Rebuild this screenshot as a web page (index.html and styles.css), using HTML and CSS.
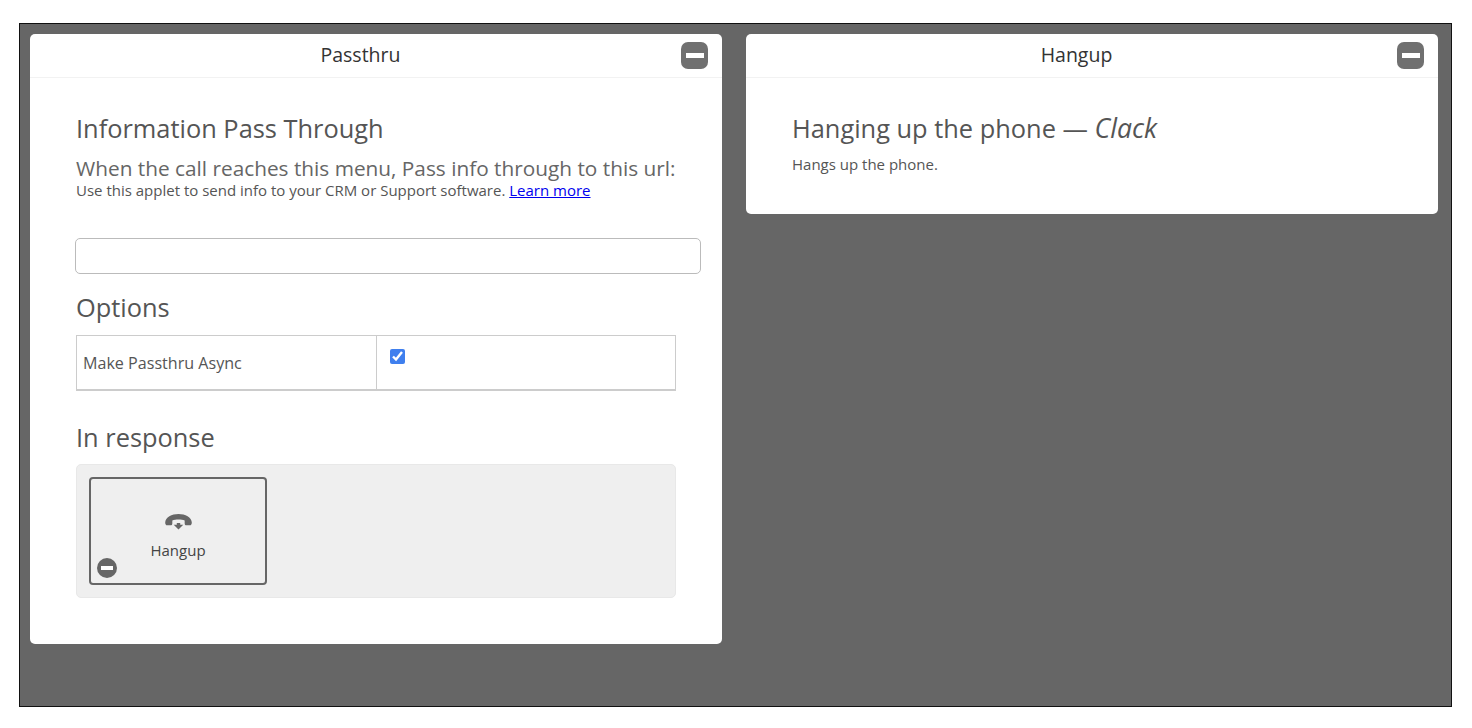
FILE: index.html
```html
<!DOCTYPE html>
<html lang="en">
<head>
<meta charset="utf-8">
<title>Flow</title>
<link rel="stylesheet" href="styles.css">
</head>
<body>
<main class="frame">
  <section class="card">
    <header class="card-head">
      <div class="card-title">Passthru</div>
      <button class="collapse" aria-label="Collapse"><span class="bar"></span></button>
    </header>
    <div class="card-body">
      <h2 class="heading">Information Pass Through</h2>
      <p class="lead">When the call reaches this menu, Pass info through to this url:</p>
      <p class="small">Use this applet to send info to your CRM or Support software. <a href="#">Learn more</a></p>
      <input class="url" type="text">
      <h2 class="heading options-title">Options</h2>
      <table class="options">
        <tr>
          <td class="opt-label">Make Passthru Async</td>
          <td class="opt-value"><input class="check" type="checkbox" checked></td>
        </tr>
      </table>
      <h2 class="heading response-title">In response</h2>
      <div class="dropzone">
        <div class="applet">
          <svg class="hang-icon" viewBox="0 0 30 20" aria-hidden="true">
            <path d="M1 11C1 5.500 8 2 15 2s14 3.500 14 9c0 1.800-.8 3-2 3h-3.500c-1.200 0-2-.8-2-2V9c-1.800-.7-3.800-1-6.500-1s-4.700.3-6.500 1v3c0 1.200-.8 2-2 2H3c-1.200 0-2-1.200-2-3z"/>
            <path d="M13.200 11.500h3.600v2h3.200L15 18.500 10 13.500h3.200z"/>
          </svg>
          <div class="applet-name">Hangup</div>
          <span class="remove"><span class="remove-bar"></span></span>
        </div>
      </div>
    </div>
  </section>
  <section class="card">
    <header class="card-head">
      <div class="card-title">Hangup</div>
      <button class="collapse" aria-label="Collapse"><span class="bar"></span></button>
    </header>
    <div class="card-body">
      <h2 class="heading">Hanging up the phone — <em class="clack">Clack</em></h2>
      <p class="note">Hangs up the phone.</p>
    </div>
  </section>
</main>
</body>
</html>
```
FILE: styles.css
```css
* { box-sizing: border-box; }
html, body { margin: 0; background: #fff; }
body { padding: 23px 20px 0 19px; font-family: "Open Sans", sans-serif; color: #555; }
.frame {
  height: 684px;
  border: 1px solid #111;
  background: #666;
  padding: 10px 13px 0 10px;
  display: grid;
  grid-template-columns: 692px 692px;
  column-gap: 24px;
  align-items: start;
}
.card { background: #fff; border-radius: 5px; }
.card-head {
  height: 44px;
  display: flex;
  align-items: center;
  padding: 0 14px 0 0;
  border-bottom: 1px solid #f2f2f2;
}
.card-title { flex: 1; text-align: center; font-size: 19.500px; color: #333; padding: 0 0 2px 10px; }
.collapse {
  width: 27px; height: 27px; padding: 0; margin-top: -1px; border: 0; border-radius: 7px;
  background: #707070; display: flex; align-items: center; justify-content: center;
}
.bar { width: 18px; height: 5px; background: #fff; }
.card-body { padding: 31px 22px 40px 46px; }
.heading { margin: 0; font-size: 25.400px; line-height: 38px; font-weight: 400; color: #555; }
.clack { font-size: 26.600px; }
.lead { margin: 8px 0 0; font-size: 20.800px; line-height: 26px; color: #666; white-space: nowrap; }
.small { margin: 0; font-size: 15px; line-height: 18px; color: #555; }
.small a { color: #00e; }
.url {
  display: block; width: 626px; height: 36px; margin: 39px 0 0 -1px;
  border: 1px solid #bbb; border-radius: 5px; background: #fff;
}
.options-title { margin-top: 14px; }
.options { width: 600px; margin: 9px 0 0; border-collapse: collapse; table-layout: fixed; }
.options td { height: 53px; border: 1px solid #ccc; border-bottom: 2px solid #ccc; padding: 0; vertical-align: top; }
.opt-label { width: 300px; padding: 2px 6px 0 !important; font-size: 16.100px; line-height: 51px; color: #555; vertical-align: middle !important; }
.check { display: block; width: 15px; height: 15px; margin: 13px 0 0 13px; accent-color: #3f7fee; }
.response-title { margin-top: 27px; }
.dropzone {
  width: 600px; height: 134px; margin: 8px 0 6px; padding: 12px;
  background: #efefef; border: 1px solid #e8e8e8; border-radius: 5px;
}
.applet {
  position: relative; width: 178px; height: 108px;
  border: 2px solid #666; border-radius: 4px;
  display: flex; flex-direction: column; align-items: center; padding-top: 33px;
}
.hang-icon { width: 29px; height: 19px; fill: #666; }
.applet-name { margin-top: 9px; font-size: 15px; line-height: 20px; color: #444; }
.remove {
  position: absolute; left: 6px; bottom: 5px; width: 20px; height: 20px; border-radius: 50%;
  background: #666; display: flex; align-items: center; justify-content: center;
}
.remove-bar { width: 12px; height: 4px; background: #fff; }
.note { margin: 7px 0 0; font-size: 15px; line-height: 20px; color: #555; }
```
